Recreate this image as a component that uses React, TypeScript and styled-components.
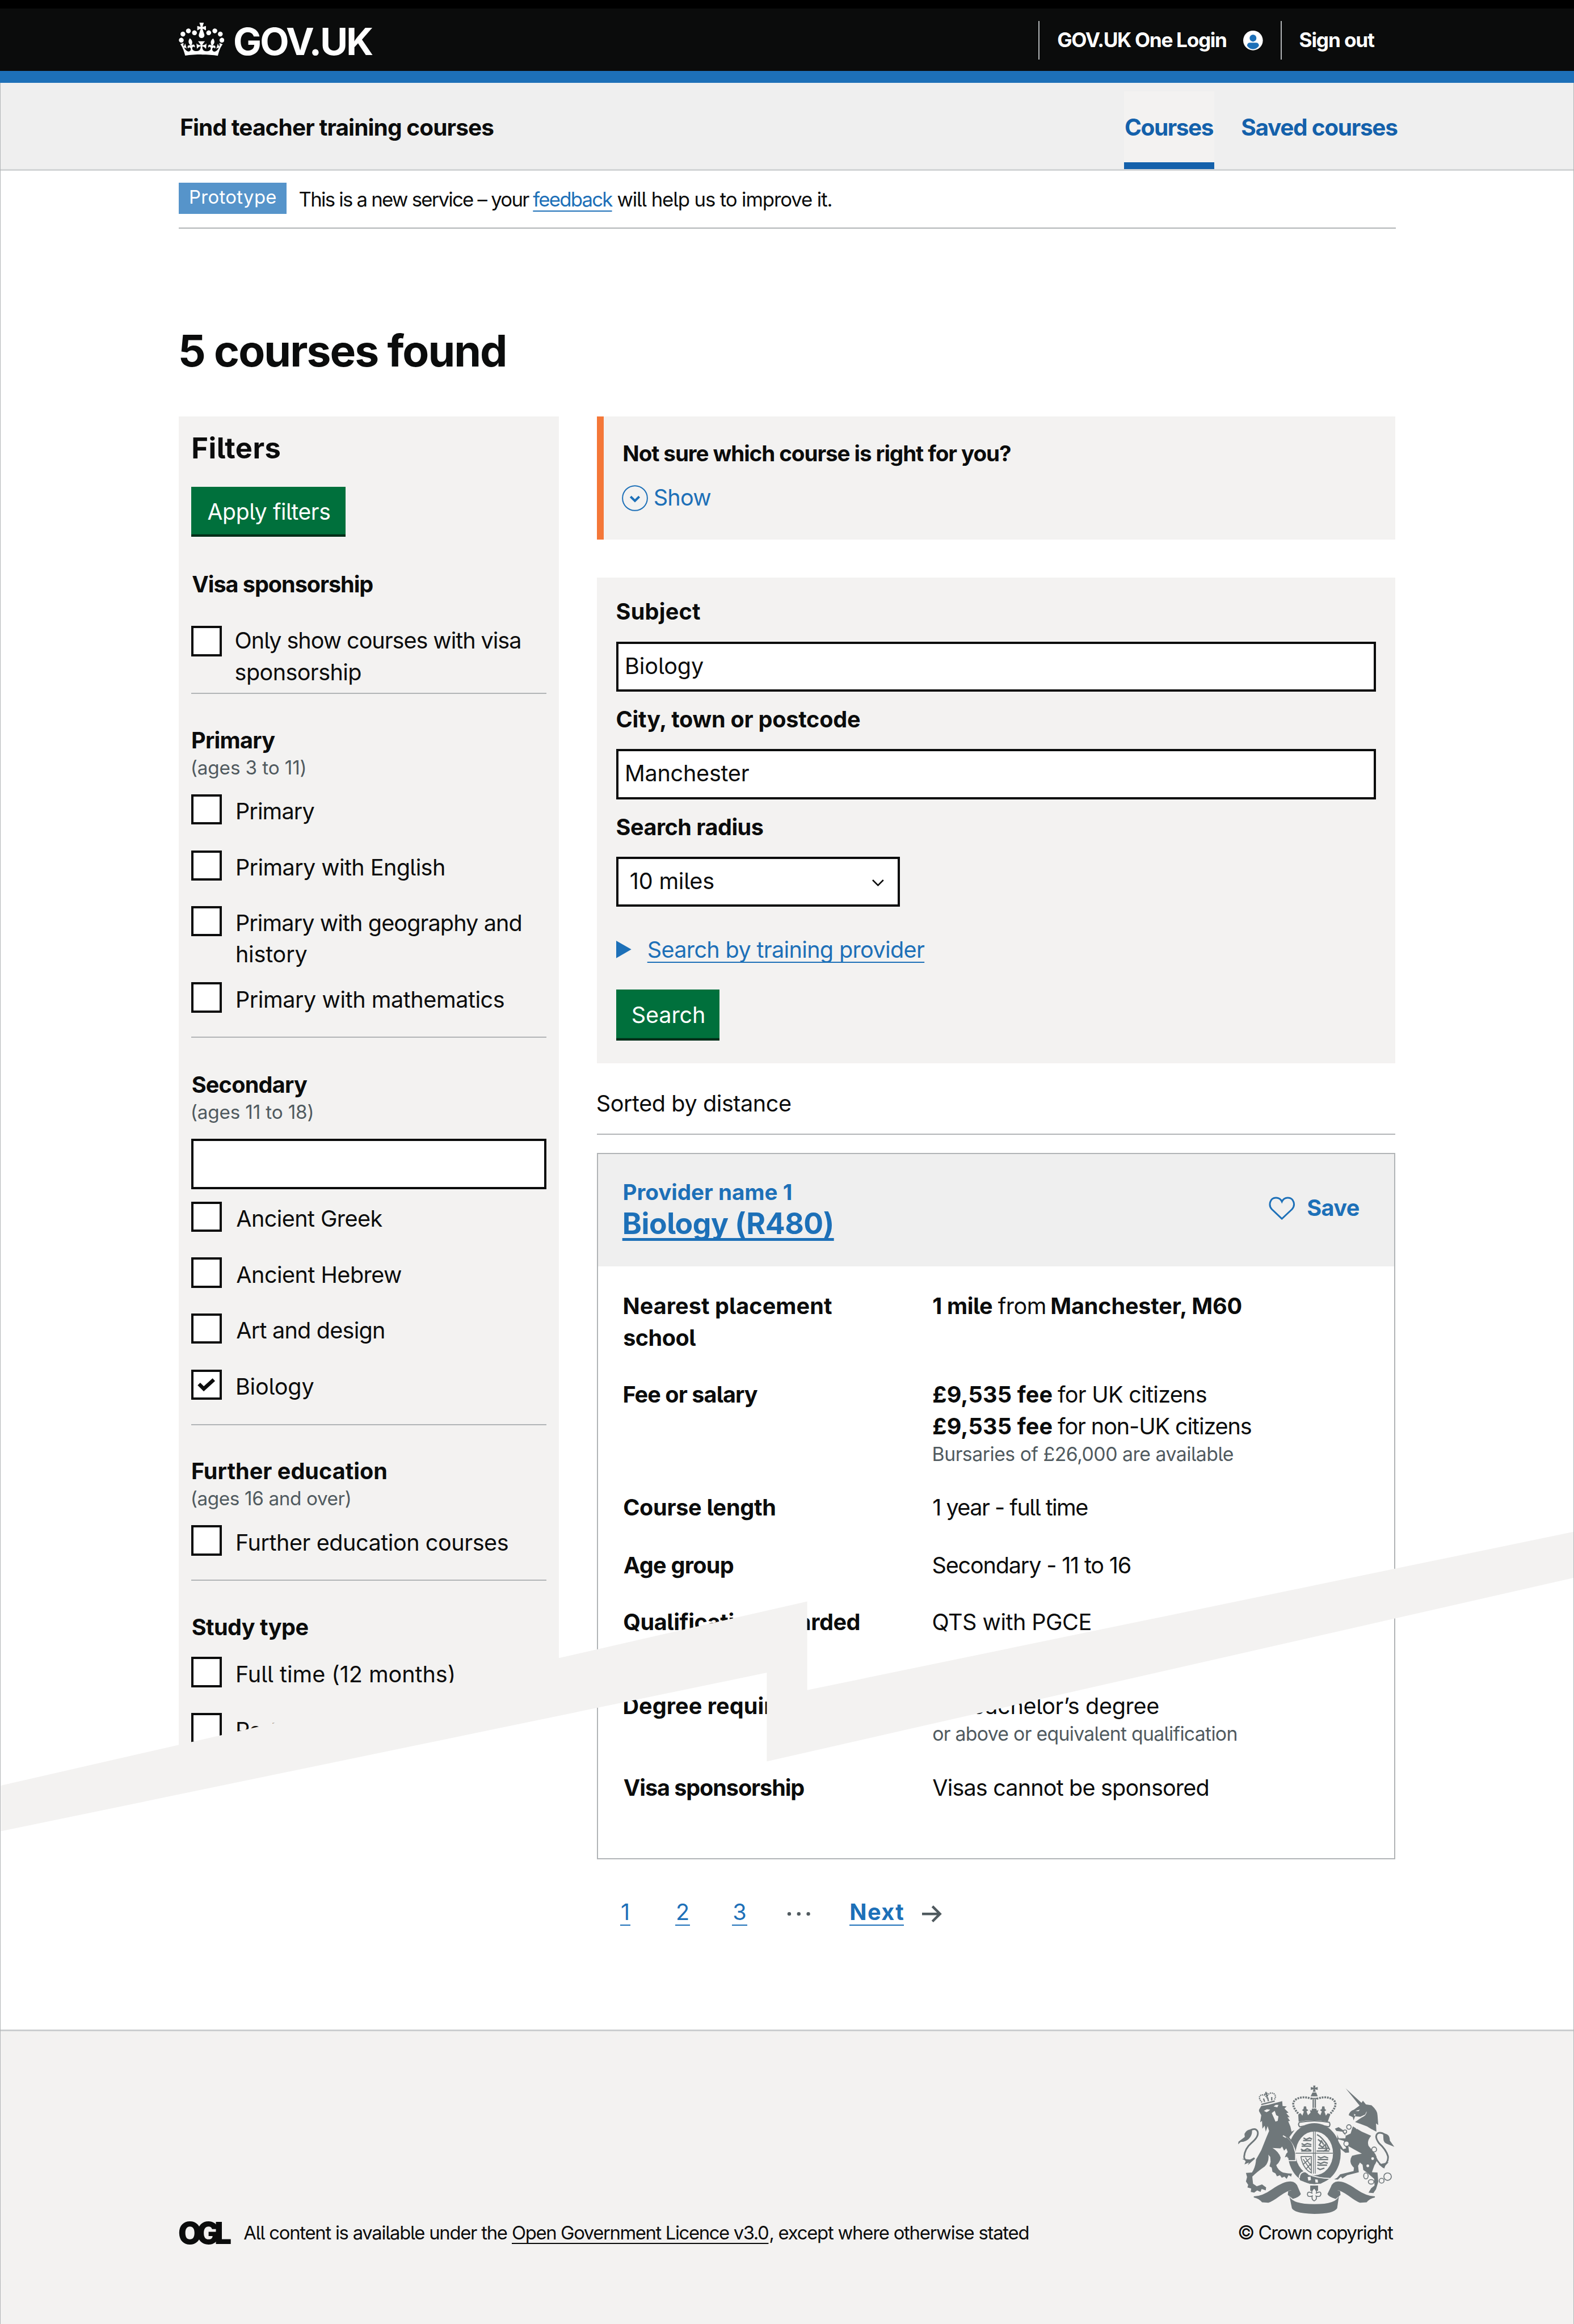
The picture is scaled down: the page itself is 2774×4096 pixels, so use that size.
import React, { useLayoutEffect, useRef } from "react";
import styled, { createGlobalStyle, css } from "styled-components";

/* 1rem is ten design pixels on a 2804px wide canvas */
const GlobalStyle = createGlobalStyle`
  html { font-size: calc(100vw / 280.4); }
  body { margin: 0; background: #fff; }
  *, *::before, *::after { box-sizing: border-box; }
`;

const c = {
  ink: "#0b0c0c",
  blue: "#1d70b8",
  navBlue: "#1461ab",
  panel: "#f3f2f1",
  bar: "#efefef",
  line: "#b1b4b6",
  grey: "#505a5f",
  green: "#00703c",
  crest: "#6f777a",
};

const sans = `Inter, Roboto, "Liberation Sans", Arial, sans-serif`;

/* ---------- text ---------- */

const Run = styled.span<{
  $w: number;
  $size: number;
  $weight: number;
  $color: string;
  $underline?: number;
  $offset?: number;
  $gap?: number;
}>`
  display: inline-block;
  vertical-align: top;
  white-space: nowrap;
  width: ${(p) => p.$w / 10}rem;
  font-family: ${sans};
  font-size: ${(p) => (p.$size * 0.976) / 10}rem;
  font-weight: ${(p) => p.$weight};
  font-feature-settings: "cv05";
  color: ${(p) => p.$color};
  margin-left: ${(p) => (p.$gap ?? 0) / 10}rem;
  ${(p) =>
    p.$underline &&
    css`
      text-decoration: underline;
      text-decoration-thickness: ${p.$underline / 10}rem;
      text-underline-offset: ${(p.$offset ?? 7) / 10}rem;
      text-decoration-skip-ink: none;
    `}
`;

type FitProps = {
  w: number;
  children: string;
  size?: number;
  bold?: boolean;
  weight?: number;
  color?: string;
  underline?: number;
  offset?: number;
  gap?: number;
};

/* Sets a single line of text to a given measure by tracking it. */
function Fit({ w, children, size = 41, bold, weight, color = c.ink, underline, offset, gap }: FitProps) {
  const ref = useRef<HTMLSpanElement>(null);
  useLayoutEffect(() => {
    const el = ref.current;
    const ctx = document.createElement("canvas").getContext("2d");
    if (!el || !ctx) return;
    el.style.letterSpacing = "0px";
    el.style.textIndent = "0px";
    const cs = getComputedStyle(el);
    const range = document.createRange();
    range.selectNodeContents(el);
    const natural = range.getBoundingClientRect().width;
    ctx.font = `${cs.fontWeight} ${cs.fontSize} ${cs.fontFamily}`;
    const m = ctx.measureText(children);
    const bearings = m.width - m.actualBoundingBoxLeft - m.actualBoundingBoxRight;
    const target = el.getBoundingClientRect().width + bearings;
    el.style.letterSpacing = `${(target - natural) / Math.max(1, children.length - 1)}px`;
    el.style.textIndent = `${m.actualBoundingBoxLeft * 0.7}px`;
  }, [children, w, size]);
  return (
    <Run
      ref={ref}
      $w={w}
      $size={size}
      $weight={weight ?? (bold ? 700 : 400)}
      $color={color}
      $underline={underline}
      $offset={offset}
      $gap={gap}
    >
      {children}
    </Run>
  );
}

const Line = styled.div<{ $lh?: number; $mt?: number; $ml?: number }>`
  display: flex;
  padding-top: 0.1rem;
  line-height: ${(p) => (p.$lh ?? 52) / 10}rem;
  height: ${(p) => (p.$lh ?? 52) / 10}rem;
  margin-top: ${(p) => (p.$mt ?? 0) / 10}rem;
  margin-left: ${(p) => (p.$ml ?? 0) / 10}rem;
`;

/* ---------- page frame ---------- */

const Page = styled.div`
  position: relative;
  width: 280.4rem;
  height: 414rem;
  overflow: hidden;
  background: #fff;
  font-family: ${sans};
  color: ${c.ink};
  display: flex;
  flex-direction: column;
  &::after {
    content: "";
    position: absolute;
    inset: 14.8rem 0 0 0;
    border: solid ${c.line};
    border-width: 0 0.15rem;
    pointer-events: none;
  }
`;

const TearMark = styled.svg`
  position: absolute;
  inset: 0;
  width: 280.4rem;
  height: 414.1rem;
  z-index: 2;
`;

/* ---------- header ---------- */

const Header = styled.header`
  background: ${c.ink};
  border-top: 1.6rem solid #000;
  height: 12.65rem;
  padding: 0.25rem 35.5rem 0 31.8rem;
  display: flex;
  align-items: center;
  justify-content: space-between;
  flex: none;
`;
const Stripe = styled.div`
  flex: none;
  height: 2.15rem;
  background: ${c.blue};
`;
const Brand = styled.div`
  display: flex;
  align-items: center;
  gap: 1.8rem;
  line-height: 6rem;
`;
const Crown = styled.svg`
  width: 8.15rem;
  height: 5.95rem;
  margin-bottom: 0.4rem;
`;
const BrandName = styled.div`
  margin-top: 0.3rem;
`;
const Account = styled.div`
  display: flex;
  align-items: center;
  line-height: 5.3rem;
`;
const Rule = styled.i`
  width: 0.2rem;
  height: 6.9rem;
  background: #b1b4b6;
  margin-right: 3.2rem;
`;
const UserIcon = styled.svg`
  width: 3.5rem;
  height: 3.5rem;
  margin: 0 3.1rem 0 3.1rem;
`;

const ServiceNav = styled.nav`
  flex: none;
  height: 15.6rem;
  background: ${c.bar};
  border-bottom: 0.4rem solid #d2d4d5;
  padding: 0 31.45rem 0 32.2rem;
  display: flex;
  justify-content: space-between;
  line-height: 5.6rem;
`;
const ServiceName = styled.div`
  margin-top: 5.13rem;
`;
const Tabs = styled.div`
  display: flex;
  gap: 4.85rem;
`;
const Tab = styled.div<{ $active?: boolean }>`
  margin-top: 1.5rem;
  padding: 3.63rem 0 0 ${(p) => (p.$active ? "0.2rem" : "0")};
  height: 13.8rem;
  ${(p) =>
    p.$active &&
    css`
      width: 16.1rem;
      background: ${c.panel};
      border-bottom: 1.3rem solid ${c.navBlue};
    `}
`;

const Phase = styled.div`
  flex: none;
  height: 10.33rem;
  margin: 0 31.7rem 0 31.8rem;
  padding-top: 2.1rem;
  border-bottom: 0.23rem solid ${c.line};
  display: flex;
`;
const PhaseTag = styled.div`
  width: 19.2rem;
  height: 5.6rem;
  line-height: 5.2rem;
  padding-left: 2rem;
  background: #5694ca;
  margin-right: 2.3rem;
`;

/* ---------- main ---------- */

const Main = styled.main`
  flex: none;
  padding: 17.15rem 31.8rem 0 31.8rem;
`;
const Columns = styled.div`
  margin-top: 7.32rem;
  display: grid;
  grid-template-columns: 67.8rem 142.3rem;
  column-gap: 6.7rem;
  align-items: start;
  height: 269.2rem;
`;

const Sidebar = styled.aside`
  background: ${c.panel};
  height: 240.8rem;
  padding: 2.56rem 2.3rem 0;
  clip-path: polygon(0 0, 100% 0, 100% 228rem, 0 100%);
`;
const Button = styled.button<{ $w: number; $h: number; $mt: number }>`
  display: flex;
  justify-content: center;
  width: ${(p) => p.$w / 10}rem;
  height: ${(p) => p.$h / 10}rem;
  line-height: ${(p) => p.$h / 10}rem;
  margin: ${(p) => p.$mt / 10}rem 0 0;
  padding: 0;
  border: 0;
  background: ${c.green};
  box-shadow: inset 0 -0.42rem 0 #002d18;
`;
const Divider = styled.hr<{ $mt: number }>`
  border: 0;
  height: 0.23rem;
  background: ${c.line};
  margin: ${(p) => p.$mt / 10}rem 0 0;
`;
const Option = styled.label<{ $mt: number }>`
  display: flex;
  align-items: flex-start;
  margin-top: ${(p) => p.$mt / 10}rem;
  line-height: 5.6rem;
`;
const Box = styled.span`
  flex: none;
  display: block;
  width: 5.4rem;
  height: 5.4rem;
  border: 0.45rem solid ${c.ink};
  background: #fff;
  margin-right: 2.65rem;
`;
const Tick = styled.svg`
  display: block;
  width: 100%;
  height: 100%;
`;
const OptionText = styled.span<{ $tight?: boolean }>`
  display: flex;
  flex-direction: column;
  margin-top: ${(p) => (p.$tight ? "-0.1rem" : "0.35rem")};
  margin-bottom: -0.1rem;
  margin-left: ${(p) => (p.$tight ? "-0.2rem" : "0")};
`;
const Field = styled.div<{ $mt: number; $w?: number; $pad?: number }>`
  margin-top: ${(p) => p.$mt / 10}rem;
  width: ${(p) => (p.$w ? `${p.$w / 10}rem` : "100%")};
  height: 8.95rem;
  line-height: 8.05rem;
  border: 0.45rem solid ${c.ink};
  background: #fff;
  padding: 0 2.4rem 0 ${(p) => (p.$pad ?? 13) / 10}rem;
  display: flex;
  align-items: center;
  justify-content: space-between;
`;

const Inset = styled.section`
  height: 21.9rem;
  background: ${c.panel};
  border-left: 1.25rem solid #f47738;
  padding: 3.98rem 0 0 3.55rem;
`;
const ShowToggle = styled.div`
  display: flex;
  align-items: center;
  margin: 3.07rem 0 0 -0.3rem;
  height: 4.65rem;
  line-height: 4.4rem;
`;
const ShowIcon = styled.svg`
  width: 4.65rem;
  height: 4.65rem;
  margin-right: 1.15rem;
`;
const SearchPanel = styled.section`
  margin-top: 6.8rem;
  background: ${c.panel};
  padding: 3.47rem 3.5rem 4.05rem;
`;
const Disclosure = styled.svg`
  width: 2.7rem;
  height: 3.1rem;
  margin: 1rem 2.95rem 0 0;
`;
const Chevron = styled.svg`
  width: 2.3rem;
  height: 1.4rem;
  margin-top: 0.3rem;
`;

const Card = styled.article`
  margin-top: 3.22rem;
  border: 0.23rem solid ${c.line};
`;
const CardHead = styled.header`
  height: 20rem;
  background: ${c.bar};
  padding: 4.15rem 6.27rem 0 4.57rem;
  display: flex;
  justify-content: space-between;
`;
const Save = styled.div`
  display: flex;
  align-items: center;
  height: 11.2rem;
  line-height: 5.2rem;
`;
const Heart = styled.svg`
  width: 4.7rem;
  height: 4.2rem;
  margin-right: 2.2rem;
`;
const Facts = styled.dl`
  margin: 0;
  padding: 4.28rem 0 9.67rem 4.57rem;
`;
const Fact = styled.div<{ $mt: number }>`
  display: grid;
  grid-template-columns: 55.1rem 1fr;
  margin-top: ${(p) => p.$mt / 10}rem;
  dt,
  dd {
    margin: 0;
  }
`;

const Pager = styled.nav`
  display: flex;
  align-items: flex-start;
  margin: 6.87rem 0 0 4.2rem;
  line-height: 5.2rem;
`;
const PageLink = styled.a<{ $w: number; $ml?: number }>`
  width: ${(p) => p.$w / 10}rem;
  height: 5rem;
  margin-left: ${(p) => (p.$ml ?? 0) / 10}rem;
  border-bottom: 0.25rem solid ${c.blue};
  color: ${c.blue};
  font-size: 4rem;
  display: flex;
  justify-content: center;
`;
const Ellipsis = styled.svg`
  width: 4.2rem;
  height: 5.2rem;
  margin-left: 7.1rem;
`;
const NextArrow = styled.svg`
  width: 3.6rem;
  height: 5.2rem;
  margin-left: 3.2rem;
`;

/* ---------- footer ---------- */

const Spacer = styled.div`
  flex: none;
  height: 18.15rem;
`;
const Footer = styled.footer`
  flex: 1;
  border-top: 0.35rem solid #cbcecf;
  background: ${c.panel};
  padding: 9.6rem 31.9rem 0 31.8rem;
`;
const FooterRow = styled.div`
  display: flex;
  align-items: flex-end;
  justify-content: space-between;
  line-height: 4.4rem;
`;
const Licence = styled.div`
  display: flex;
  align-items: flex-start;
  height: 4.4rem;
`;
const Ogl = styled.div`
  line-height: 4.5rem;
  margin-right: 2.3rem;
`;
const CrestBlock = styled.div`
  width: 27.9rem;
  display: flex;
  flex-direction: column;
`;
const CrestArt = styled.svg`
  width: 27.9rem;
  height: 23rem;
  margin-bottom: 1.17rem;
`;

/* ---------- pieces ---------- */

function Check({ mt, on, lines, tight }: { mt: number; on?: boolean; tight?: boolean; lines: [string, number][] }) {
  return (
    <Option $mt={mt}>
      <Box>
        {on && (
          <Tick viewBox="0 0 45 45" fill="none" stroke={c.ink} strokeWidth="6.5">
            <path d="M9.500 21l8.500 8.500L35.500 13.500" />
          </Tick>
        )}
      </Box>
      <OptionText $tight={tight}>
        {lines.map(([t, w]) => (
          <Fit key={t} w={w}>
            {t}
          </Fit>
        ))}
      </OptionText>
    </Option>
  );
}

function Group({ mt, title, w, note, noteW }: { mt: number; title: string; w: number; note?: string; noteW?: number }) {
  return (
    <>
      <Line $mt={mt} $ml={1}>
        <Fit w={w} bold>
          {title}
        </Fit>
      </Line>
      {note && (
        <Line $lh={44} $ml={0.5}>
          <Fit w={noteW ?? 200} size={34.5} color={c.grey}>
            {note}
          </Fit>
        </Line>
      )}
    </>
  );
}

function Crest() {
  const bg = c.panel;
  return (
    <CrestArt viewBox="138 100 838 694" fill={c.crest} stroke="none" preserveAspectRatio="none">
      {/* royal crown */}
      <path d="M540 102h12l-2 12 14-4v16l-14-4 3 14h-15l3-14-14 4v-16l14 4zM536 140h20l8 20h-38z" />
      <g fill="none" stroke={c.crest}>
        <path d="M470 262C436 232 420 196 446 178C476 158 510 166 536 174" strokeWidth="11" strokeDasharray="9 5" />
        <path d="M622 262C656 232 672 196 646 178C616 158 582 166 556 174" strokeWidth="11" strokeDasharray="9 5" />
        <path d="M528 172h36M540 176v46M551 176v46" strokeWidth="7" />
        <path d="M466 300q80-16 160 0q8 14-2 24q-78-20-156 0q-12-12-2-24z" strokeWidth="6" />
      </g>
      <path d="M460 262l12-12 10 14 8-22-10-8 8-6 2-14h12l2 14 10 6-10 8 8 20 14-14-4-16 8 6 4-12h22l4 12 8-6-4 16 14 14 8-20-10-8 10-6 2-14h12l2 14 8 6-10 8 8 22 10-14 12 12-12 34q-78-14-156 0z" />
      {/* lion crown */}
      <g fill="none" stroke={c.crest} strokeWidth="7">
        <path d="M262 204l72-18" />
        <path d="M266 192C244 170 250 152 272 152Q284 154 292 166Q296 146 314 142C336 142 346 160 330 180" strokeDasharray="6 4" />
        <path d="M286 136l8 26M278 150l18-6M280 190l-6-18M300 186l-4-20M318 182v-18" />
      </g>
      {/* lion */}
      <path d="M250 232L262 212L300 206L374 186L376 212L398 214L386 226L408 248L396 250L414 272L402 272L416 292L406 294Q420 322 424 350L440 342L412 380Q434 410 440 450L442 496L430 488L424 498L414 486L404 492L400 484L388 488L396 468L404 460L396 440L384 452L374 430L364 440L322 438Q356 458 366 490Q364 512 342 530Q350 556 378 570L404 574L426 576L422 592L408 584L398 604L386 592L372 598L362 584L346 590L338 574L322 566L318 544L306 536L312 512L310 486L300 474Q306 512 280 538Q240 566 214 592L218 630L238 644L266 634L288 650L286 666L264 658L258 674L240 666L224 678L206 674L208 656L188 650L192 636L180 618L186 594L180 572L212 570Q232 540 234 500L262 450L290 380L304 346L296 320L286 350L280 318L268 334L266 292L256 300L262 262L250 240Z" />
      <path d="M170 486Q174 440 208 412Q252 376 242 348Q232 328 204 342M170 486Q176 524 226 492" fill="none" stroke={c.crest} strokeWidth="9" />
      <path d="M212 338Q184 336 172 362L174 378L140 404L138 418L152 406Q184 404 198 386Q216 366 212 338ZM158 496L180 506L172 526L196 516L190 530L228 496L204 500Z" />
      <g fill={bg}>
        <path d="M276 238l16-8 18 2-10 8-10 6zM328 214l12-8 14 0-6 14zM318 250l16-12 8 24 12 6-4 24-12 4-10-24z" />
      </g>
      {/* garter and shield */}
      <ellipse cx="546" cy="468" rx="141" ry="164" />
      <path d="M378 372Q432 400 446 466V506H404" fill="none" stroke={bg} strokeWidth="6" />
      <ellipse cx="546" cy="467" rx="100" ry="118" fill={bg} />
      <path d="M392 378Q436 404 438 460L440 498L428 488L418 496L406 488L402 440Z" />
      <g fill="none" stroke={c.crest}>
        <path d="M446 466h200M541 350v226M551 350v226" strokeWidth="4" />
        <path d="M488 384l14 8 18-8 14 6M478 414l14 8 16-8 22 6M474 444l16 8 18-10 22 10M486 398h44M478 428h52M476 454h54" strokeWidth="7" />
        <path d="M560 366q14 6 30 24l20 24 18 34M566 392l16 14-10 16 18 12 14-14 8 26-18 10M582 396l14 24M566 440h60M558 454h68" strokeWidth="7" />
        <path d="M474 484h56v88q-44-20-56-88M486 498l40 58M498 490l30 44M484 528l40-36M500 552l28-30" strokeWidth="5" />
        <path d="M564 484l16 8 20-8 20 8M562 514l18 8 18-8 20 6M562 546l14 8 24-8M564 500h56M562 530h52" strokeWidth="7" />
      </g>
      <path d="M462 588Q478 560 500 570Q520 592 566 598L626 604L580 630H520L470 612Z" />
      <path d="M486 566Q510 562 516 580Q566 600 628 602M466 600Q464 574 488 566" fill="none" stroke={bg} strokeWidth="6" />
      <path d="M510 594l16-2 2 18-14 4zM550 606l14 2 2 16-14 0z" fill={bg} />
      <path d="M524 640h42v28h-12l-9-12-9 12h-12z" />
      <path d="M545 652q16 14 12 28q26-14 24 8q-4 16-26 8q8 18-10 26q-16-8-10-26q-24 8-26-8q0-20 24-8q-4-16 12-28z" fill="none" stroke={c.crest} strokeWidth="5" />
      {/* unicorn */}
      <path d="M713 117L806 202L790 212Z" />
      <path d="M788 210L806 184L822 204L852 208Q884 236 884 262L888 314L876 306L878 350L850 336L828 322L792 308L764 298L796 276Q828 262 826 240L818 258L792 270L764 268L756 290L752 272L730 262Q734 240 758 232Z" />
      <path d="M752 322L800 350L850 372Q826 400 836 426L872 470Q890 500 868 530L854 568L884 570L888 620L876 660L862 680L836 678L850 654L868 640L866 604L830 572L808 556L804 528L790 516L780 534L784 568L722 584L696 602L688 592L672 608L652 606L668 598L684 580L756 562L758 544Q726 514 748 480Q770 472 800 468L760 446L728 428L732 462L712 464L686 442L668 412L664 390L676 382L672 400L700 444L716 440L704 400L670 390L668 364L676 386L712 386L714 372L696 350L664 346L656 334L676 326L706 346L714 372L740 360Z" />
      <path d="M758 312l14 20 10-18 10 24 14-16 10 26 12-14 12 24 14-14 6 18" fill="none" stroke={bg} strokeWidth="6" />
      <path d="M766 238l24-6-8 8zM758 254l10 6-8 6z" fill={bg} />
      <path d="M906 538Q944 520 940 482Q930 446 892 412Q866 376 884 360Q900 350 924 366M872 486Q888 520 916 542" fill="none" stroke={c.crest} strokeWidth="9" />
      <path d="M914 360Q950 360 950 398L974 432L940 418Q916 410 916 392ZM890 526L944 514L926 532L920 548Z" />
      <g fill={bg} stroke={c.crest} strokeWidth="5">
        <circle cx="731" cy="325" r="12" />
        <circle cx="710" cy="350" r="9" />
        <circle cx="718" cy="415" r="14" />
        <circle cx="866" cy="446" r="13" />
        <circle cx="858" cy="495" r="10" />
        <circle cx="832" cy="534" r="10" />
        <ellipse cx="822" cy="588" rx="12" ry="16" />
        <ellipse cx="850" cy="620" rx="15" ry="12" />
        <circle cx="906" cy="614" r="13" />
        <circle cx="938" cy="592" r="20" />
      </g>
      {/* motto ribbon */}
      <path d="M222 698Q266 698 322 658Q384 616 420 618Q448 620 458 648L474 686Q466 702 432 712L404 690L406 670L424 664Q400 668 364 694Q318 728 300 732L266 730Q250 710 222 704Z" />
      <path d="M870 698Q826 698 768 658Q708 616 672 618Q644 620 634 648L616 686Q624 702 660 712L686 690L684 670L668 664Q692 668 728 694Q774 728 790 732L826 730Q842 710 870 704Z" />
      <path d="M412 694Q424 740 546 740Q666 740 678 694L668 762Q650 792 546 792Q440 790 426 762Z" />
      <path d="M430 714Q470 704 476 690M660 714Q622 704 614 690" fill="none" stroke={bg} strokeWidth="4" />
    </CrestArt>
  );
}

const Small = ({ w, children }: { w: number; children: string }) => (
  <Line $lh={44} $mt={-2.2}>
    <Fit w={w} size={35} color={c.grey}>
      {children}
    </Fit>
  </Line>
);

const B = ({ w, children }: { w: number; children: string }) => (
  <Fit w={w} bold>
    {children}
  </Fit>
);

const Term = ({ lines }: { lines: [string, number][] }) => (
  <dt>
    {lines.map(([t, w]) => (
      <Line key={t} $lh={56.5}>
        <B w={w}>{t}</B>
      </Line>
    ))}
  </dt>
);

export default function App() {
  return (
    <Page>
      <GlobalStyle />
      <Header>
        <Brand>
          <Crown viewBox="0 0 132 97" fill="#fff">
            <path d="M25 30.2c3.5 1.5 7.7-.2 9.1-3.7 1.5-3.6-.2-7.8-3.9-9.2-3.6-1.4-7.6.3-9.1 3.9-1.4 3.5.3 7.5 3.9 9zM9 39.5c3.6 1.5 7.8-.2 9.2-3.7 1.5-3.6-.2-7.8-3.9-9.1-3.6-1.5-7.6.2-9.1 3.8-1.4 3.5.3 7.5 3.8 9zM4.4 57.2c3.5 1.5 7.7-.2 9.1-3.8 1.5-3.6-.2-7.7-3.9-9.1-3.5-1.5-7.6.3-9.1 3.8-1.4 3.5.3 7.6 3.9 9.1zm38.3-21.4c3.5 1.5 7.7-.2 9.1-3.8 1.5-3.6-.2-7.7-3.9-9.1-3.6-1.5-7.6.3-9.1 3.8-1.3 3.6.4 7.7 3.9 9.1zm64.4-5.6c-3.6 1.5-7.8-.2-9.1-3.7-1.5-3.6.2-7.8 3.8-9.2 3.6-1.4 7.7.3 9.2 3.9 1.3 3.5-.4 7.5-3.9 9zm15.9 9.3c-3.6 1.5-7.7-.2-9.1-3.7-1.5-3.6.2-7.8 3.7-9.1 3.6-1.5 7.7.2 9.2 3.8 1.5 3.5-.3 7.5-3.8 9zm4.7 17.7c-3.6 1.5-7.8-.2-9.2-3.8-1.5-3.6.2-7.7 3.9-9.1 3.6-1.5 7.7.3 9.2 3.8 1.3 3.5-.4 7.6-3.9 9.1zM89.3 35.8c-3.6 1.5-7.8-.2-9.2-3.8-1.4-3.6.2-7.7 3.9-9.1 3.6-1.5 7.7.3 9.2 3.8 1.4 3.6-.3 7.7-3.9 9.1zM69.7 17.7l8.9 4.7V9.3l-8.9 2.8c-.2-.3-.5-.6-.9-.9L72.4 0H59.6l3.5 11.2c-.3.3-.6.5-.9.9l-8.8-2.8v13.1l8.8-4.7c.3.3.6.7.9.9l-5 15.4v.1c-.2.8-.4 1.6-.4 2.4 0 4.1 3.1 7.5 7 8.1h.2c.3 0 .7.1 1 .1.4 0 .7 0 1-.1h.2c4-.6 7.1-4.1 7.1-8.1 0-.8-.1-1.7-.4-2.4V34l-5.1-15.4c.4-.2.7-.6 1-.9zM66 92.8c16.9 0 32.8 1.1 47.1 3.2 4-16.9 8.9-26.7 14-33.5l-9.6-3.4c1 4.9 1.1 7.2 0 10.2-1.5-1.4-3-4.3-4.2-8.7L108.6 76c2.8-2 5-3.2 7.5-3.3-4.4 9.4-10 11.9-13.6 11.2-4.3-.8-6.3-4.6-5.6-7.9 1-4.7 5.7-5.9 8-.5 4.3-8.7-3-11.4-7.6-8.8 7.1-7.2 7.9-13.5 2.1-21.1-8 6.1-8.1 12.3-4.5 20.8-4.7-5.4-12.1-2.5-9.5 6.2 3.4-5.2 7.9-2 7.2 3.1-.6 4.3-6.4 7.8-13.5 7.2-10.3-.9-10.9-8-11.2-13.8 2.5-.5 7.1 1.8 11 7.3L80.2 60c-4.1 4.4-8 5.3-12.3 5.4 1.4-4.4 8-11.6 8-11.6H55.5s6.4 7.2 7.9 11.6c-4.2-.1-8-1-12.3-5.4l1.4 16c3.9-5.5 8.5-7.7 10.9-7.3-.3 5.8-.9 12.8-11.1 13.8-7.2.6-12.9-2.9-13.5-7.2-.7-5 3.8-8.3 7.1-3.1 2.7-8.7-4.6-11.6-9.4-6.2 3.7-8.5 3.6-14.7-4.6-20.8-5.8 7.6-5 13.9 2.2 21.1-4.7-2.6-11.9.1-7.7 8.8 2.3-5.5 7.1-4.2 8.1.5.7 3.3-1.3 7.1-5.7 7.9-3.5.7-9-1.8-13.5-11.2 2.5.1 4.7 1.3 7.5 3.3l-4.7-15.4c-1.2 4.4-2.7 7.2-4.3 8.7-1.1-3-.9-5.3 0-10.2l-9.5 3.4c5 6.9 9.9 16.7 14 33.5 14.8-2.1 30.8-3.2 47.7-3.2z" />
          </Crown>
          <BrandName>
            <Fit w={246} size={69} bold color="#fff">
              GOV.UK
            </Fit>
          </BrandName>
        </Brand>
        <Account>
          <Rule />
          <Fit w={300} size={36.5} bold color="#fff">
            GOV.UK One Login
          </Fit>
          <UserIcon viewBox="0 0 35 35">
            <circle cx="17.5" cy="17.5" r="17.5" fill="#fff" />
            <ellipse cx="17.5" cy="13.3" rx="6" ry="6.3" fill={c.blue} />
            <path d="M7 27q0-5.6 5-5.6h11q5 0 5 5.6-4 6-10.500 6T7 27z" fill={c.blue} />
          </UserIcon>
          <Rule />
          <Fit w={134} size={36.5} bold color="#fff">
            Sign out
          </Fit>
        </Account>
      </Header>
      <Stripe />
      <ServiceNav>
        <ServiceName>
          <Fit w={557} size={42} bold>
            Find teacher training courses
          </Fit>
        </ServiceName>
        <Tabs>
          <Tab $active>
            <Fit w={157.5} size={42} bold color={c.navBlue}>
              Courses
            </Fit>
          </Tab>
          <Tab>
            <Fit w={278} size={42} bold color={c.navBlue}>
              Saved courses
            </Fit>
          </Tab>
        </Tabs>
      </ServiceNav>
      <Phase>
        <PhaseTag>
          <Fit w={153} size={34} color="#fff">
            Prototype
          </Fit>
        </PhaseTag>
        <Line $lh={56} $mt={1.2}>
          <Fit w={410} size={36}>
            This is a new service – your
          </Fit>
          <Fit w={142.5} size={36} color={c.blue} gap={6.5} underline={2.2} offset={7}>
            feedback
          </Fit>
          <Fit w={381} size={36} gap={8}>
            will help us to improve it.
          </Fit>
        </Line>
      </Phase>

      <Main>
        <Line $lh={90} $ml={2}>
          <Fit w={578.5} size={79.5} bold>
            5 courses found
          </Fit>
        </Line>
        <Columns>
          <Sidebar>
            <Line $lh={60} $ml={2}>
              <Fit w={155} size={52.5} bold>
                Filters
              </Fit>
            </Line>
            <Button $w={275} $h={89.5} $mt={39.4}>
              <Fit w={218} size={40.5} color="#fff">
                Apply filters
              </Fit>
            </Button>
            <Group mt={58} title="Visa sponsorship" w={322.5} />
            <Check
              mt={49}
              tight
              lines={[
                ["Only show courses with visa", 507],
                ["sponsorship", 223],
              ]}
            />
            <Divider $mt={8.4} />
            <Group mt={57.2} title="Primary" w={148} note="(ages 3 to 11)" noteW={201} />
            <Check mt={25.6} lines={[["Primary", 138]]} />
            <Check mt={41.5} lines={[["Primary with English", 369]]} />
            <Check
              mt={40.5}
              lines={[
                ["Primary with geography and", 506],
                ["history", 125],
              ]}
            />
            <Check mt={21.8} lines={[["Primary with mathematics", 475]]} />
            <Divider $mt={38} />
            <Group mt={57.7} title="Secondary" w={205.5} note="(ages 11 to 18)" noteW={214} />
            <Field $mt={26.1} />
            <Check mt={22.5} lines={[["Ancient Greek", 260]]} />
            <Check mt={41.2} lines={[["Ancient Hebrew", 294]]} />
            <Check mt={41.2} lines={[["Art and design", 262.5]]} />
            <Check mt={41.2} on lines={[["Biology", 137]]} />
            <Divider $mt={38.5} />
            <Group mt={56.2} title="Further education" w={346} note="(ages 16 and over)" noteW={281} />
            <Check mt={26.1} lines={[["Further education courses", 482]]} />
            <Divider $mt={38.2} />
            <Group mt={56.2} title="Study type" w={207} />
            <Check mt={27.5} lines={[["Full time (12 months)", 386]]} />
            <Check mt={41.5} lines={[["Part time (24 months)", 396]]} />
          </Sidebar>

          <div>
            <Inset>
              <Line>
                <Fit w={689} size={40} bold>
                  Not sure which course is right for you?
                </Fit>
              </Line>
              <ShowToggle>
                <ShowIcon viewBox="0 0 46.500 46.500" fill="none" stroke={c.blue}>
                  <circle cx="23.25" cy="23.25" r="22.1" strokeWidth="2" />
                  <path d="M15.500 20.500l7.750 7.500 7.750-7.500" strokeWidth="4" />
                </ShowIcon>
                <Fit w={100.5} color={c.blue}>
                  Show
                </Fit>
              </ShowToggle>
            </Inset>

            <SearchPanel>
              <Line>
                <B w={149}>Subject</B>
              </Line>
              <Field $mt={27.3}>
                <Fit w={137.5}>Biology</Fit>
              </Field>
              <Line $mt={22.9}>
                <B w={434}>City, town or postcode</B>
              </Line>
              <Field $mt={27}>
                <Fit w={219}>Manchester</Fit>
              </Field>
              <Line $mt={24}>
                <B w={261}>Search radius</B>
              </Line>
              <Field $mt={26.3} $w={505.5} $pad={20.5}>
                <Fit w={148}>10 miles</Fit>
                <Chevron viewBox="0 0 23 14" fill="none" stroke={c.ink} strokeWidth="2.6">
                  <path d="M2 2l9.500 9.500L21 2" />
                </Chevron>
              </Field>
              <Line $mt={49.8}>
                <Disclosure viewBox="0 0 27 31" fill={c.blue}>
                  <path d="M0 0l27 15.500L0 31z" />
                </Disclosure>
                <Fit w={492.5} color={c.blue} underline={2.2} offset={7}>
                  Search by training provider
                </Fit>
              </Line>
              <Button $w={184} $h={91} $mt={45.4}>
                <Fit w={127.5} color="#fff">
                  Search
                </Fit>
              </Button>
            </SearchPanel>

            <Line $mt={45.5} $ml={0.5}>
              <Fit w={345}>Sorted by distance</Fit>
            </Line>
            <Divider $mt={27.5} />

            <Card>
              <CardHead>
                <div>
                  <Line>
                    <Fit w={298.5} size={40} bold color={c.blue}>
                      Provider name 1
                    </Fit>
                  </Line>
                  <Line $lh={56} $mt={1.4}>
                    <Fit w={370} size={53.5} bold color={c.blue} underline={5.5} offset={7}>
                      Biology (R480)
                    </Fit>
                  </Line>
                </div>
                <Save>
                  <Heart viewBox="0 0 47 42" fill="none" stroke={c.blue} strokeWidth="3">
                    <path d="M23.500 39.500L5.500 22.500C-1 15.500 2 2 13 2C18 2 21.500 4.500 23.500 9C25.500 4.500 29 2 34 2C45 2 48 15.500 41.500 22.500Z" />
                  </Heart>
                  <Fit w={92.5} bold color={c.blue}>
                    Save
                  </Fit>
                </Save>
              </CardHead>
              <Facts>
                <Fact $mt={0}>
                  <Term
                    lines={[
                      ["Nearest placement", 370.5],
                      ["school", 127],
                    ]}
                  />
                  <dd>
                    <Line $lh={56.5}>
                      <B w={106}>1 mile</B>
                      <Fit w={84} gap={10}>
                        from
                      </Fit>
                      <Fit w={338} gap={11} bold>
                        Manchester, M60
                      </Fit>
                    </Line>
                  </dd>
                </Fact>
                <Fact $mt={45}>
                  <Term lines={[["Fee or salary", 239]]} />
                  <dd>
                    <Line $lh={56.5}>
                      <B w={212.5}>£9,535 fee</B>
                      <Fit w={264.5} gap={10}>
                        for UK citizens
                      </Fit>
                    </Line>
                    <Line $lh={56.5}>
                      <B w={212.5}>£9,535 fee</B>
                      <Fit w={344.5} gap={10}>
                        for non-UK citizens
                      </Fit>
                    </Line>
                    <Small w={535}>Bursaries of £26,000 are available</Small>
                  </dd>
                </Fact>
                <Fact $mt={46.2}>
                  <Term lines={[["Course length", 270]]} />
                  <dd>
                    <Line $lh={56.5}>
                      <Fit w={276}>1 year - full time</Fit>
                    </Line>
                  </dd>
                </Fact>
                <Fact $mt={46.2}>
                  <Term lines={[["Age group", 196]]} />
                  <dd>
                    <Line $lh={56.5}>
                      <Fit w={352}>Secondary - 11 to 16</Fit>
                    </Line>
                  </dd>
                </Fact>
                <Fact $mt={45.1}>
                  <Term lines={[["Qualification awarded", 420]]} />
                  <dd>
                    <Line $lh={56.5}>
                      <Fit w={281}>QTS with PGCE</Fit>
                    </Line>
                  </dd>
                </Fact>
                <Fact $mt={93}>
                  <Term lines={[["Degree required", 312]]} />
                  <dd>
                    <Line $lh={56.5}>
                      <Fit w={402}>2:2 bachelor’s degree</Fit>
                    </Line>
                    <Small w={541}>or above or equivalent qualification</Small>
                  </dd>
                </Fact>
                <Fact $mt={47.7}>
                  <Term lines={[["Visa sponsorship", 322]]} />
                  <dd>
                    <Line $lh={56.5}>
                      <Fit w={490.5}>Visas cannot be sponsored</Fit>
                    </Line>
                  </dd>
                </Fact>
              </Facts>
            </Card>

            <Pager>
              <PageLink $w={18}>1</PageLink>
              <PageLink $w={26} $ml={80}>
                2
              </PageLink>
              <PageLink $w={27} $ml={75}>
                3
              </PageLink>
              <Ellipsis viewBox="0 0 42 52" fill={c.grey}>
                <circle cx="4" cy="28.500" r="3.200" />
                <circle cx="21" cy="28.500" r="3.200" />
                <circle cx="38" cy="28.500" r="3.200" />
              </Ellipsis>
              <PageLink $w={97} $ml={69.5}>
                <Fit w={94} size={41} bold color={c.blue}>
                  Next
                </Fit>
              </PageLink>
              <NextArrow viewBox="0 0 36 52" fill="none" stroke={c.grey} strokeWidth="4.5">
                <path d="M0 28.500h32M18.500 15l13.500 13.500L18.500 42" />
              </NextArrow>
            </Pager>
          </div>
        </Columns>
      </Main>

      <TearMark viewBox="0 0 2804 4141">
        <path
          d="M1.500 3181L1438 2853V3011L2803 2729V2811L1366 3138V2980L1.500 3262.500Z"
          fill={c.panel}
        />
      </TearMark>

      <Spacer />
      <Footer>
        <FooterRow>
          <Licence>
            <Ogl>
              <Fit w={93} size={55.3} weight={900}>
                OGL
              </Fit>
            </Ogl>
            <Fit w={469.5} size={34}>
              All content is available under the
            </Fit>
            <Fit w={456} size={34} gap={9} underline={2.4} offset={6}>
              Open Government Licence v3.0
            </Fit>
            <Fit w={460} size={34} gap={3}>
              , except where otherwise stated
            </Fit>
          </Licence>
          <CrestBlock>
            <Crest />
            <Fit w={276} size={34.5}>
              © Crown copyright
            </Fit>
          </CrestBlock>
        </FooterRow>
      </Footer>
    </Page>
  );
}
